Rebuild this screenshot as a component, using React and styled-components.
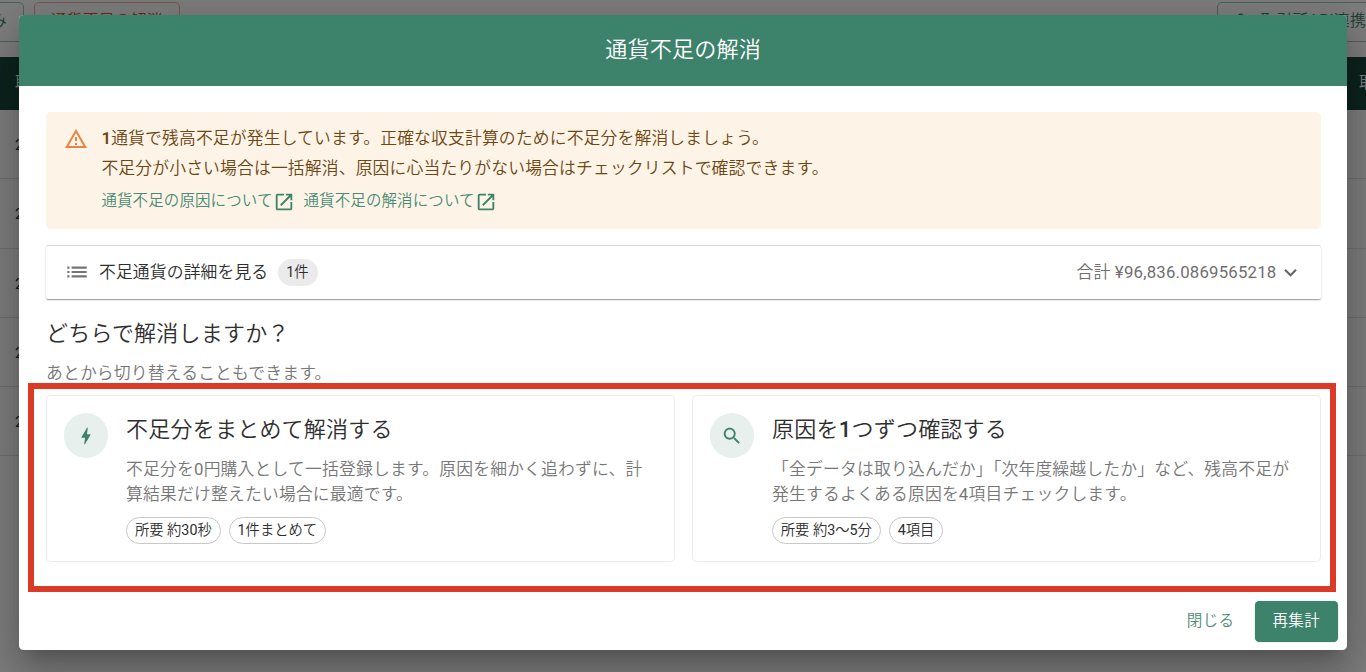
import React from "react";
import styled, { createGlobalStyle } from "styled-components";

const GREEN = "#3d826b";

const GlobalStyle = createGlobalStyle`
  *, *::before, *::after { box-sizing: border-box; }
  html, body { margin: 0; height: 100%; overflow: hidden; }
  body {
    font-family: Roboto, "Noto Sans CJK JP DemiLight", "Noto Sans CJK JP Light", "Noto Sans CJK JP", sans-serif;
    font-size: 16.8px;
    line-height: 1.5;
    color: #2e2e2e;
    background: #fff;
  }
  p, h1, h2, h3 { margin: 0; font-weight: 400; }
  button { font: inherit; border: 0; background: none; padding: 0; }
`;

const Screen = styled.div`
  position: relative;
  width: 1366px;
  height: 672px;
  overflow: hidden;
`;

const Page = styled.div`
  height: 100%;
  background: #fbfbfb;
`;

const Toolbar = styled.div`
  display: flex;
  justify-content: space-between;
  height: 57px;
  padding-top: 1.5px;
`;

const ToolbarGroup = styled.div`
  display: flex;
  gap: 10px;
`;

const OutlineButton = styled.button`
  display: flex;
  align-items: center;
  justify-content: ${(p) => p.$align || "center"};
  gap: 14px;
  width: ${(p) => p.$width}px;
  height: 40px;
  padding: 1px 16px 0;
  border: 1px solid ${(p) => (p.$danger ? "#ecb09c" : "#9ec1b5")};
  border-radius: 5px;
  color: ${(p) => (p.$danger ? "#d84a32" : GREEN)};
  font-size: 15.6px;
  letter-spacing: 0.4px;
  white-space: nowrap;
  margin-left: ${(p) => p.$shift || 0}px;
  margin-right: ${(p) => p.$shiftRight || 0}px;
  svg { margin: 0 0 3px 1px; }
`;

const TableHead = styled.div`
  display: flex;
  align-items: center;
  justify-content: space-between;
  height: 53px;
  padding-left: 15px;
  background: #1b473a;
  color: #fff;
  font-size: 15.5px;
`;

const HeadCell = styled.span`
  width: ${(p) => p.$width}px;
  overflow: hidden;
  white-space: nowrap;
`;

const TableRow = styled.div`
  display: flex;
  align-items: center;
  height: 69.3px;
  padding: 3px 0 0 15px;
  border-bottom: 1px solid #dcdcdc;
  font-size: 15.5px;
`;

const Backdrop = styled.div`
  position: absolute;
  inset: 0;
  padding: 15px 19px 0 19.4px;
  background: rgba(0, 0, 0, 0.5);
`;

const Dialog = styled.section`
  display: flex;
  flex-direction: column;
  height: 635.4px;
  overflow: hidden;
  border-radius: 4.5px;
  background: #fff;
  box-shadow: 0 12px 17px -8px rgba(0, 0, 0, 0.2), 0 27px 42px 3px rgba(0, 0, 0, 0.14),
    0 10px 51px 9px rgba(0, 0, 0, 0.12);
`;

const DialogHeader = styled.header`
  display: flex;
  align-items: center;
  justify-content: center;
  flex: none;
  height: 71px;
  padding-bottom: 2px;
  background: ${GREEN};
  color: #fff;
  font-size: 22.1px;
  letter-spacing: 0.17px;
`;

const DialogBody = styled.div`
  flex: 1;
  padding: 26px 26px 0 26.6px;
`;

const Alert = styled.div`
  display: flex;
  gap: 13.4px;
  height: 116.6px;
  padding: 10px 18px;
  border-radius: 4.5px;
  background: #fdf4e7;
  color: #6d4613;
`;

const AlertIcon = styled.svg`
  flex: none;
  width: 24px;
  height: 24px;
  margin-top: 4.5px;
  fill: #ed8243;
`;

const AlertLine = styled.p`
  height: 31px;
  line-height: 31px;
  font-size: 16.8px;
  letter-spacing: 0.17px;
  white-space: nowrap;
  b { font-weight: 600; }
  &:first-child { line-height: 32px; }
`;

const LinkRow = styled.div`
  display: flex;
  gap: 9px;
  height: 34px;
  padding-top: 2px;
  align-items: center;
`;

const InfoLink = styled.a`
  display: flex;
  align-items: center;
  color: #4a8b75;
  font-size: 15.5px;
  letter-spacing: 0.1px;
  svg { width: 22px; height: 22px; fill: ${GREEN}; }
`;

const Accordion = styled.div`
  display: flex;
  align-items: center;
  height: 53px;
  margin-top: 17.4px;
  padding: 0 19.5px 0 18px;
  border-radius: 2px;
  background: #fff;
  box-shadow: 0 2px 1px -1px rgba(0, 0, 0, 0.2), 0 1px 1px 0 rgba(0, 0, 0, 0.14),
    0 1px 3px 0 rgba(0, 0, 0, 0.12), 0 -1px 0 0 #dadada;
`;

const ListGlyph = styled.svg`
  width: 26px;
  height: 26px;
  margin-right: 9px;
  fill: #757575;
`;

const AccordionTitle = styled.span`
  font-size: 16.8px;
  letter-spacing: 0.15px;
`;

const CountChip = styled.span`
  display: flex;
  align-items: center;
  justify-content: center;
  width: 40px;
  height: 26.5px;
  margin-left: 9.2px;
  border-radius: 14px;
  background: #ebebeb;
  font-size: 14.3px;
`;

const Total = styled.span`
  margin-left: auto;
  color: #6f6f6f;
  font-size: 16.8px;
  letter-spacing: 0.2px;
`;

const Chevron = styled.svg`
  width: 25px;
  height: 25px;
  margin: 0 -1px 0 1px;
  fill: #666;
`;

const Question = styled.h2`
  height: 33px;
  margin-top: 18px;
  line-height: 33px;
  font-size: 22px;
  letter-spacing: 0.2px;
`;

const Hint = styled.p`
  height: 26px;
  margin-top: 10px;
  line-height: 26px;
  color: #777;
  font-size: 16.8px;
  letter-spacing: 0.18px;
`;

const Choices = styled.div`
  display: grid;
  grid-template-columns: 1fr 1fr;
  gap: 17px;
  margin-top: 9px;
`;

const ChoiceCard = styled.article`
  display: flex;
  gap: 17.8px;
  height: 166.6px;
  padding: 17.5px 16.8px;
  border: 1px solid #ececec;
  border-radius: 4.5px;
`;

const Avatar = styled.span`
  display: flex;
  flex: none;
  align-items: center;
  justify-content: center;
  width: 44.5px;
  height: 44.5px;
  border-radius: 50%;
  background: #e7f0ed;
  svg { width: 22px; height: 22px; fill: ${GREEN}; }
`;

const ChoiceTitle = styled.h3`
  height: 36px;
  line-height: 34px;
  font-size: 22px;
  letter-spacing: 0.22px;
  white-space: nowrap;
  b { font-weight: 500; }
`;

const ChoiceText = styled.p`
  margin-top: 7.6px;
  color: #777;
  font-size: 16.8px;
  line-height: 25.3px;
  letter-spacing: 0.2px;
  white-space: nowrap;
`;

const ChipRow = styled.div`
  display: flex;
  gap: 8.5px;
  margin-top: 9px;
`;

const Chip = styled.span`
  display: flex;
  align-items: center;
  justify-content: center;
  width: ${(p) => p.$width}px;
  height: 27.5px;
  border: 1px solid #c8c8c8;
  border-radius: 14px;
  font-size: 14.3px;
  white-space: nowrap;
`;

const DialogFooter = styled.footer`
  display: flex;
  align-items: center;
  justify-content: flex-end;
  gap: 20px;
  flex: none;
  height: 58px;
  padding: 0 9px 0 0;
`;

const ActionButton = styled.button`
  height: 41px;
  border-radius: 4.5px;
  color: ${(p) => (p.$filled ? "#fff" : "#4a8b75")};
  background: ${(p) => (p.$filled ? GREEN : "transparent")};
  width: ${(p) => (p.$filled ? "83.5px" : "auto")};
  font-size: 15.5px;
  letter-spacing: 0.4px;
  box-shadow: ${(p) => (p.$filled ? "0 0 1px rgba(61,130,107,.8)" : "none")};
`;

const Highlight = styled.div`
  position: absolute;
  left: 28px;
  top: 383px;
  width: 1308px;
  height: 209px;
  border: 6px solid #da3a26;
  pointer-events: none;
`;

const OpenInNew = () => (
  <svg viewBox="0 0 24 24">
    <path d="M19 19H5V5h7V3H5c-1.11 0-2 .9-2 2v14c0 1.1.89 2 2 2h14c1.1 0 2-.9 2-2v-7h-2v7zM14 3v2h3.59l-9.83 9.83 1.41 1.41L19 6.41V10h2V3h-7z" />
  </svg>
);

const Bolt = () => (
  <svg viewBox="0 0 24 24">
    <path d="M11 21h-1l1-7H7.5c-.58 0-.57-.32-.38-.66.19-.34.05-.08.07-.12C8.48 10.94 10.42 7.54 13 3h1l-1 7h3.5c.49 0 .56.33.47.51l-.07.15C12.96 17.55 11 21 11 21z" />
  </svg>
);

const Search = () => (
  <svg viewBox="0 0 24 24">
    <path d="M15.5 14h-.79l-.28-.27C15.41 12.59 16 11.11 16 9.5 16 5.91 13.09 3 9.5 3S3 5.91 3 9.5 5.91 16 9.5 16c1.61 0 3.09-.59 4.23-1.57l.27.28v.79l5 4.99L20.49 19l-4.99-5zm-6 0C7.01 14 5 11.99 5 9.5S7.01 5 9.5 5 14 7.01 14 9.5 11.99 14 9.5 14z" />
  </svg>
);

const Choice = ({ icon, title, lines, chips }) => (
  <ChoiceCard>
    <Avatar>{icon}</Avatar>
    <div>
      <ChoiceTitle>{title}</ChoiceTitle>
      <ChoiceText>
        {lines[0]}
        <br />
        {lines[1]}
      </ChoiceText>
      <ChipRow>
        {chips.map(([label, width]) => (
          <Chip key={label} $width={width}>{label}</Chip>
        ))}
      </ChipRow>
    </div>
  </ChoiceCard>
);

export default function App() {
  return (
    <Screen>
      <GlobalStyle />
      <Page>
        <Toolbar>
          <ToolbarGroup>
            <OutlineButton $width={124} $shift={-100} $align="flex-end">取り込み</OutlineButton>
            <OutlineButton $width={145.5} $danger>通貨不足の解消</OutlineButton>
          </ToolbarGroup>
          <OutlineButton $width={166} $shiftRight={-17} $align="flex-start">
            <svg width="14" height="17" viewBox="0 0 14 17" fill={GREEN}>
              <circle cx="7" cy="3.5" r="3.5" />
              <path d="M0 16c0-4 3-6 7-6s7 2 7 6z" />
            </svg>
            取引所API連携
          </OutlineButton>
        </Toolbar>
        <TableHead>
          <HeadCell $width={60}>取引日</HeadCell>
          <HeadCell $width={7}>取引</HeadCell>
        </TableHead>
        {[0, 1, 2, 3, 4].map((row) => (
          <TableRow key={row}>2</TableRow>
        ))}
      </Page>

      <Backdrop>
        <Dialog>
          <DialogHeader>通貨不足の解消</DialogHeader>
          <DialogBody>
            <Alert>
              <AlertIcon viewBox="0 0 24 24">
                <path d="M12 5.99 19.53 19H4.47L12 5.99M12 2 1 21h22L12 2zm1 14h-2v2h2v-2zm0-6h-2v4h2v-4z" />
              </AlertIcon>
              <div>
                <AlertLine>
                  <b>1</b>通貨で残高不足が発生しています。正確な収支計算のために不足分を解消しましょう。
                </AlertLine>
                <AlertLine>
                  不足分が小さい場合は一括解消、原因に心当たりがない場合はチェックリストで確認できます。
                </AlertLine>
                <LinkRow>
                  <InfoLink>通貨不足の原因について<OpenInNew /></InfoLink>
                  <InfoLink>通貨不足の解消について<OpenInNew /></InfoLink>
                </LinkRow>
              </div>
            </Alert>

            <Accordion>
              <ListGlyph viewBox="0 0 24 24">
                <path d="M3 13h2v-2H3v2zm0 4h2v-2H3v2zm0-8h2V7H3v2zm4 4h14v-2H7v2zm0 4h14v-2H7v2zM7 7v2h14V7H7z" />
              </ListGlyph>
              <AccordionTitle>不足通貨の詳細を見る</AccordionTitle>
              <CountChip>1件</CountChip>
              <Total>合計 ¥96,836.0869565218</Total>
              <Chevron viewBox="0 0 24 24">
                <path d="M16.59 8.59 12 13.17 7.41 8.59 6 10l6 6 6-6z" />
              </Chevron>
            </Accordion>

            <Question>どちらで解消しますか？</Question>
            <Hint>あとから切り替えることもできます。</Hint>

            <Choices>
              <Choice
                icon={<Bolt />}
                title="不足分をまとめて解消する"
                lines={[
                  "不足分を0円購入として一括登録します。原因を細かく追わずに、計",
                  "算結果だけ整えたい場合に最適です。",
                ]}
                chips={[["所要 約30秒", 94.5], ["1件まとめて", 96.5]]}
              />
              <Choice
                icon={<Search />}
                title={<>原因を<b>1</b>つずつ確認する</>}
                lines={[
                  "「全データは取り込んだか」「次年度繰越したか」など、残高不足が",
                  "発生するよくある原因を4項目チェックします。",
                ]}
                chips={[["所要 約3〜5分", 108.5], ["4項目", 54]]}
              />
            </Choices>
          </DialogBody>
          <DialogFooter>
            <ActionButton>閉じる</ActionButton>
            <ActionButton $filled>再集計</ActionButton>
          </DialogFooter>
        </Dialog>
      </Backdrop>
      <Highlight />
    </Screen>
  );
}
